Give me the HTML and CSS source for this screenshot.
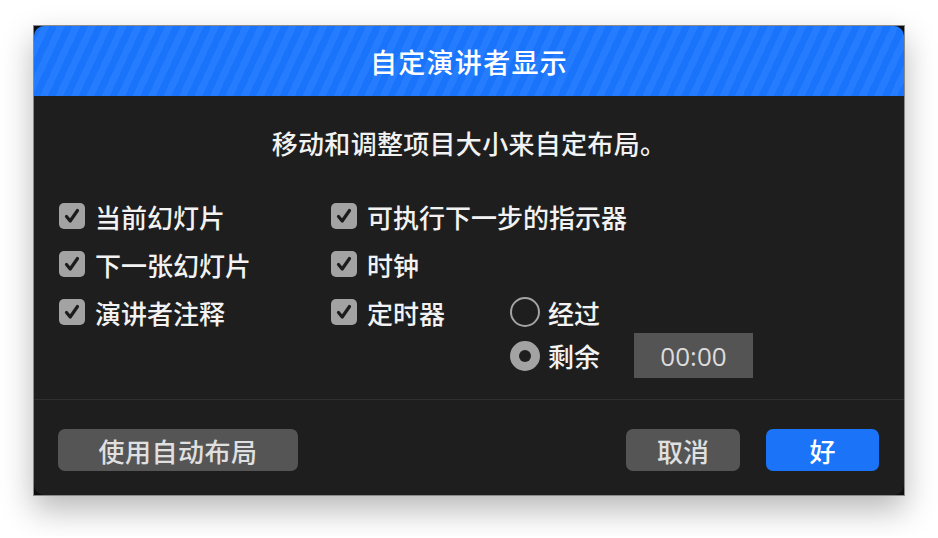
FILE: index.html
```html
<!DOCTYPE html>
<html lang="zh-CN">
<head>
    <meta charset="UTF-8">
    <meta name="viewport" content="width=device-width, initial-scale=1.0">
    <title>自定演讲者显示</title>
    <link rel="stylesheet" href="styles.css">
</head>
<body>
    <div class="dialog">
        <div class="sheet">
            <header class="title-bar">
                <h1>自定演讲者显示</h1>
            </header>

            <section class="content">
                <p class="hint">移动和调整项目大小来自定布局。</p>

                <div class="options">
                    <label class="check"><span class="box"><svg viewBox="0 0 26 26"><path d="M7.5 13.5 L11.2 18 L18.5 7.5"/></svg></span>当前幻灯片</label>
                    <label class="check"><span class="box"><svg viewBox="0 0 26 26"><path d="M7.5 13.5 L11.2 18 L18.5 7.5"/></svg></span>可执行下一步的指示器</label>
                    <span></span>

                    <label class="check"><span class="box"><svg viewBox="0 0 26 26"><path d="M7.5 13.5 L11.2 18 L18.5 7.5"/></svg></span>下一张幻灯片</label>
                    <label class="check"><span class="box"><svg viewBox="0 0 26 26"><path d="M7.5 13.5 L11.2 18 L18.5 7.5"/></svg></span>时钟</label>
                    <span></span>

                    <label class="check"><span class="box"><svg viewBox="0 0 26 26"><path d="M7.5 13.5 L11.2 18 L18.5 7.5"/></svg></span>演讲者注释</label>
                    <label class="check"><span class="box"><svg viewBox="0 0 26 26"><path d="M7.5 13.5 L11.2 18 L18.5 7.5"/></svg></span>定时器</label>
                    <div class="timer-mode">
                        <label class="radio"><span class="dot"></span>经过</label>
                        <div class="remain-row">
                            <label class="radio on"><span class="dot"></span>剩余</label>
                            <div class="time-field">00:00</div>
                        </div>
                    </div>
                </div>
            </section>

            <footer class="actions">
                <button type="button" class="btn wide">使用自动布局</button>
                <div class="right">
                    <button type="button" class="btn">取消</button>
                    <button type="button" class="btn primary">好</button>
                </div>
            </footer>
        </div>
    </div>
</body>
</html>
```

FILE: styles.css
```css
body {
    margin: 0;
    background: #fff;
    font-family: "Noto Sans CJK SC", "Noto Sans", sans-serif;
    color: #f2f2f2;
    padding: 25px 0 40px 33px;
}
.dialog {
    width: 870px;
    border: 1px solid #8a8a8a;
    background: #0e0e0e;
    box-shadow: 0 14px 30px rgba(0, 0, 0, 0.28);
}
.sheet {
    background: #1e1e1e;
    border-radius: 10px;
    overflow: hidden;
}
.title-bar {
    height: 70px;
    display: flex;
    align-items: center;
    justify-content: center;
    background: repeating-linear-gradient(115deg, #1a73fb 0, #1a73fb 7px, #257cff 7px, #257cff 14px);
}
h1 {
    margin: 0;
    font-size: 27px;
    font-weight: 500;
    color: #fff;
    letter-spacing: 1.3px;
}
.content {
    height: 303px;
    border-bottom: 1px solid #2f2f2f;
    padding: 0 0 0 25px;
}
.hint {
    margin: 0;
    padding: 31px 25px 0 0;
    height: 73px;
    text-align: center;
    font-size: 26px;
    font-weight: 500;
    line-height: 32px;
    letter-spacing: 0.3px;
}
.options {
    display: grid;
    grid-template-columns: 272px 179px 1fr;
    row-gap: 16px;
    align-items: start;
}
.check, .radio {
    display: flex;
    align-items: center;
    height: 32px;
    font-size: 26px;
    font-weight: 500;
    white-space: nowrap;
}
.box {
    flex-shrink: 0;
    width: 26px;
    height: 26px;
    border-radius: 5px;
    background: #a3a3a3;
    margin-right: 10px;
}
.box svg {
    display: block;
    width: 26px;
    height: 26px;
    fill: none;
    stroke: #1c1c1c;
    stroke-width: 3.2;
    stroke-linecap: round;
    stroke-linejoin: round;
}
.timer-mode {
    display: flex;
    flex-direction: column;
    gap: 5px;
}
.dot {
    flex-shrink: 0;
    width: 30px;
    height: 30px;
    box-sizing: border-box;
    border-radius: 50%;
    border: 2px solid #a3a3a3;
    margin-right: 8px;
    position: relative;
}
.radio.on .dot {
    background: #a3a3a3;
}
.radio.on .dot::after {
    content: "";
    position: absolute;
    left: 7px;
    top: 7px;
    width: 12px;
    height: 12px;
    border-radius: 50%;
    background: #1e1e1e;
}
.remain-row {
    display: flex;
    align-items: center;
    gap: 34px;
}
.time-field {
    width: 119px;
    height: 45px;
    background: #545454;
    color: #dcdcdc;
    font-family: "Open Sans", sans-serif;
    font-size: 26px;
    display: flex;
    align-items: center;
    justify-content: center;
}
.actions {
    display: flex;
    justify-content: space-between;
    padding: 29px 25px 24px 24px;
}
.right {
    display: flex;
    gap: 26px;
}
.btn {
    height: 42px;
    width: 114px;
    border: none;
    border-radius: 7px;
    background: #555;
    color: #e0e0e0;
    font-family: inherit;
    font-size: 26px;
    font-weight: 500;
    padding: 0;
}
.btn.wide {
    width: 240px;
    letter-spacing: 0.5px;
}
.btn.primary {
    background: #1b74f7;
    color: #fff;
    width: 113px;
}
```
